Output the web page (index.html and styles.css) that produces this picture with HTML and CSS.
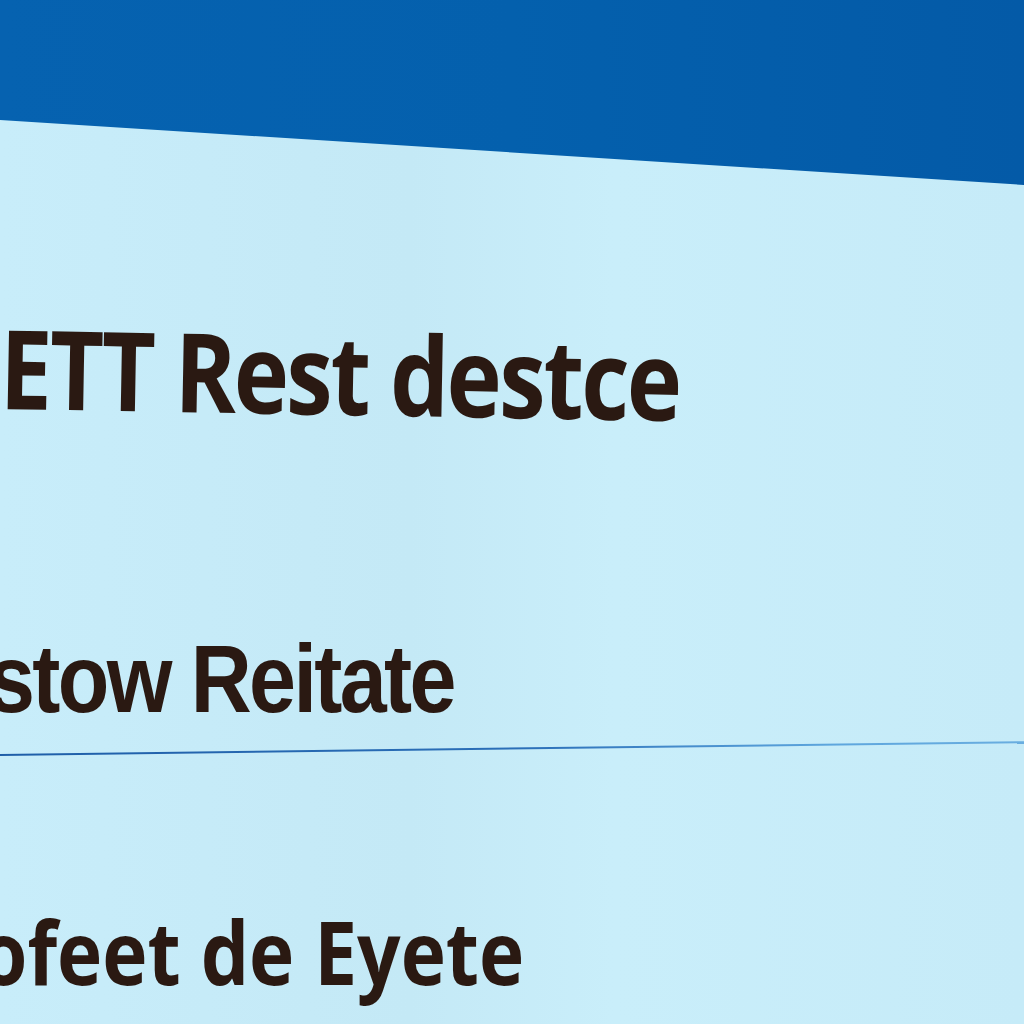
FILE: index.html
```html
<!DOCTYPE html>
<html lang="en">
<head>
<meta charset="utf-8">
<title>Screen</title>
<link rel="stylesheet" href="styles.css">
</head>
<body>
<div class="screen">
  <header class="band"></header>
  <main class="content">
    <div class="row row-title">
      <h1 class="title">ETT Rest destce</h1>
    </div>
    <div class="row row-item">
      <p class="item">stow Reitate</p>
    </div>
    <div class="divider"></div>
    <div class="row row-last">
      <p class="last">ofeet de Eyete</p>
    </div>
  </main>
</div>
</body>
</html>
```
FILE: styles.css
```css
html, body {
  margin: 0;
  padding: 0;
}
body {
  width: 1024px;
  height: 1024px;
  overflow: hidden;
  background: #c7ecf9;
}
.screen {
  width: 1024px;
  height: 1024px;
  display: flex;
  flex-direction: column;
  background: linear-gradient(90deg, #c8edfa 0%, #c4e9f6 40%, #c9eefa 60%, #c6ebf8 100%);
  overflow: hidden;
}
.band {
  height: 190px;
  flex: none;
  background: linear-gradient(90deg, #0662b0 0%, #0460ad 50%, #045aa7 100%);
  clip-path: polygon(0 0, 100% 0, 100% 185px, 0 120px);
}
.content {
  display: flex;
  flex-direction: column;
}
.row {
  display: flex;
}
.title {
  margin: 121px 0 0 0;
  font-family: "Open Sans", sans-serif;
  font-weight: 700;
  font-size: 110px;
  line-height: 1;
  letter-spacing: -3px;
  color: #2a1912;
  white-space: nowrap;
  transform: rotate(1deg) scaleX(0.85);
  transform-origin: left center;
}
.item {
  margin: 210px 0 0 -12px;
  font-family: "Liberation Sans", Arial, sans-serif;
  font-weight: 700;
  font-size: 96px;
  line-height: 1;
  letter-spacing: -3px;
  color: #2a1912;
  white-space: nowrap;
  transform: scaleX(0.88);
  transform-origin: left center;
}
.divider {
  margin-top: 27px;
  height: 2px;
  width: 1040px;
  background: linear-gradient(90deg, #1f5ea8 0%, #2b6fb8 50%, #5ea6dd 80%, #6aaee0 100%);
  transform: rotate(-0.72deg);
  transform-origin: left center;
}
.last {
  margin: 151px 0 0 -20px;
  font-family: "Open Sans", sans-serif;
  font-weight: 700;
  font-size: 88px;
  line-height: 1;
  color: #2a1912;
  white-space: nowrap;
  transform: scaleX(0.87);
  transform-origin: left center;
}
```
